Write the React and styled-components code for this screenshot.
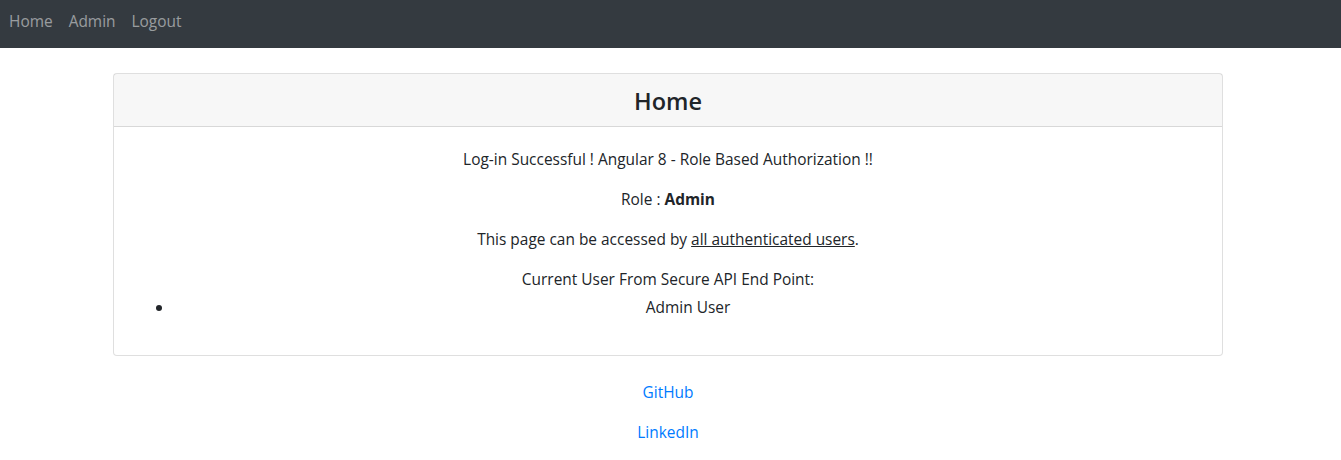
import styled, { createGlobalStyle } from "styled-components";

const GlobalStyle = createGlobalStyle`
  body {
    margin: 0;
    font-family: "Open Sans", "Noto Sans", sans-serif;
    font-size: 15.45px;
    line-height: 24px;
    color: #212529;
    background: #fff;
  }
`;

const Navbar = styled.nav`
  height: 48px;
  padding: 9px 1px 0;
  box-sizing: border-box;
  background-color: #343a40;
  display: flex;
  align-items: flex-start;
`;

const NavLink = styled.a`
  padding: 0 8px;
  line-height: 24px;
  color: rgba(255, 255, 255, 0.5);
  text-decoration: none;
`;

const Container = styled.div`
  width: 1110px;
  margin: 25px 0 0 113px;
`;

const Card = styled.div`
  border: 1px solid rgba(0, 0, 0, 0.125);
  border-radius: 4px;
  background: #fff;
`;

const CardHeader = styled.div`
  padding: 13px 20px 10px;
  background-color: rgba(0, 0, 0, 0.03);
  border-bottom: 1px solid rgba(0, 0, 0, 0.125);
  text-align: center;
`;

const Title = styled.h3`
  margin: 0;
  font-size: 23.5px;
  line-height: 28.8px;
  font-weight: 600;
`;

const CardBody = styled.div`
  padding: 20px;
  text-align: center;
`;

const Text = styled.p`
  margin: 0 0 ${({ $tight }) => ($tight ? "0" : "16px")};
`;

const Underlined = styled.span`
  text-decoration: underline;
`;

const List = styled.ul`
  margin: 0 0 16px;
  padding: 4px 0 0 40px;
`;

const Footer = styled.div`
  margin-top: 24px;
  text-align: center;
`;

const FooterLink = styled.a`
  color: #007bff;
  text-decoration: none;
`;

export default function App() {
  return (
    <>
      <GlobalStyle />
      <Navbar>
        <NavLink href="#">Home</NavLink>
        <NavLink href="#">Admin</NavLink>
        <NavLink href="#">Logout</NavLink>
      </Navbar>

      <Container>
        <Card>
          <CardHeader>
            <Title>Home</Title>
          </CardHeader>
          <CardBody>
            <Text>Log-in Successful ! Angular 8 - Role Based Authorization !!</Text>
            <Text>
              Role : <strong>Admin</strong>
            </Text>
            <Text>
              This page can be accessed by <Underlined>all authenticated users</Underlined>.
            </Text>
            <Text $tight>Current User From Secure API End Point:</Text>
            <List>
              <li>Admin User</li>
            </List>
          </CardBody>
        </Card>

        <Footer>
          <Text>
            <FooterLink href="#">GitHub</FooterLink>
          </Text>
          <Text>
            <FooterLink href="#">LinkedIn</FooterLink>
          </Text>
        </Footer>
      </Container>
    </>
  );
}
